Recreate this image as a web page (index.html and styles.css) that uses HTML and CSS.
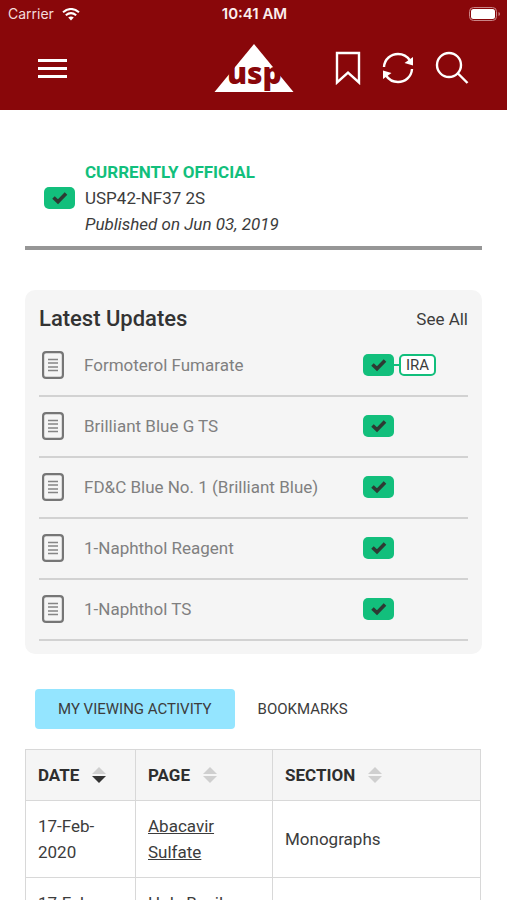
FILE: index.html
```html
<!DOCTYPE html>
<html lang="en">
<head>
<meta charset="utf-8">
<meta name="viewport" content="width=device-width, initial-scale=1">
<title>USP</title>
<link rel="stylesheet" href="styles.css">
</head>
<body>
<svg class="defs" width="0" height="0" aria-hidden="true">
  <symbol id="check" viewBox="0 0 16 14"><path d="M1.500 6.500 6 10.800 14 2.600" fill="none" stroke="#2d3a33" stroke-width="3.6"/></symbol>
  <symbol id="doc" viewBox="0 0 22 28"><rect x="1.100" y="1.100" width="19.800" height="25.800" rx="3" fill="none" stroke="#767676" stroke-width="2.200"/><path d="M6 8.500h10M6 12h10M6 16h10M6 19.500h10" stroke="#858585" stroke-width="1.5"/></symbol>
  <symbol id="sort" viewBox="0 0 14 18"><path class="up" d="M7 1 14 8H0Z"/><path class="down" d="M0 10h14L7 17Z"/></symbol>
</svg>
<div class="app">
  <header class="header">
    <div class="status">
      <div class="carrier">Carrier
        <svg width="18" height="13" viewBox="0 0 18 13" fill="none" stroke="#fff" stroke-width="2.1"><path d="M1 4.300Q9-2.300 17 4.300M3.800 7.300Q9 3 14.200 7.300"/><path d="M6.200 9.500Q9 7.300 11.800 9.500L9 12.500Z" fill="#fff" stroke="none"/></svg>
      </div>
      <div class="clock">10:41 AM</div>
      <div class="power">
        <svg width="32" height="14" viewBox="0 0 32 14"><rect x=".5" y=".5" width="27" height="13" rx="4" fill="none" stroke="#c98587"/><rect x="2" y="2" width="24" height="10" rx="2.500" fill="#fff"/><path d="M29.500 5v4q1.500-.5 1.500-2t-1.500-2" fill="#c98587"/></svg>
      </div>
    </div>
    <nav class="bar">
      <button class="icon-btn menu" aria-label="Menu"><svg width="30" height="22" viewBox="0 0 30 22" stroke="#fff" stroke-width="3"><path d="M0 3.500h29M0 11.500h29M0 19.500h29"/></svg></button>
      <a class="logo" href="#" aria-label="USP home">
        <svg width="80" height="50" viewBox="0 0 80 50"><path d="M40 1 79.500 49H.5Z" fill="#fff"/><text x="13" y="41" class="logo-text">usp</text></svg>
      </a>
      <div class="actions">
        <button class="icon-btn" aria-label="Bookmarks"><svg width="26" height="34" viewBox="0 0 26 34"><path d="M2 2h22v29.500L13 21.500 2 31.500Z" fill="none" stroke="#fff" stroke-width="2.400"/></svg></button>
        <button class="icon-btn" aria-label="Refresh"><svg width="32" height="34" viewBox="0 0 32 34"><g fill="none" stroke="#fff" stroke-width="2.400"><path d="M2 16C2.500 8 9 3 16 3c5 0 9 2 12 6.500"/><path d="M30 18C29.500 26 23 31 16 31c-5 0-9-2-12-6.500"/></g><path d="M31 6v8.500L22.500 12ZM1 28v-8.500L9.500 22Z" fill="#fff"/></svg></button>
        <button class="icon-btn" aria-label="Search"><svg width="34" height="34" viewBox="0 0 34 34" fill="none" stroke="#fff" stroke-width="2.400"><circle cx="14" cy="14" r="12"/><path d="M22.500 22 32.500 32"/></svg></button>
      </div>
    </nav>
  </header>
  <main class="content">
    <section class="official">
      <span class="badge"><svg width="16" height="14"><use href="#check"/></svg></span>
      <div>
        <h1 class="official-title">CURRENTLY OFFICIAL</h1>
        <p>USP42-NF37 2S</p>
        <p class="published">Published on Jun 03, 2019</p>
      </div>
    </section>
    <section class="updates">
      <div class="updates-head"><h2>Latest Updates</h2><a href="#">See All</a></div>
      <ul class="list">
        <li><svg width="22" height="28"><use href="#doc"/></svg><span class="name">Formoterol Fumarate</span><span class="tags"><span class="badge"><svg width="16" height="14"><use href="#check"/></svg></span><span class="link"></span><span class="ira">IRA</span></span></li>
        <li><svg width="22" height="28"><use href="#doc"/></svg><span class="name">Brilliant Blue G TS</span><span class="tags"><span class="badge"><svg width="16" height="14"><use href="#check"/></svg></span></span></li>
        <li><svg width="22" height="28"><use href="#doc"/></svg><span class="name">FD&amp;C Blue No. 1 (Brilliant Blue)</span><span class="tags"><span class="badge"><svg width="16" height="14"><use href="#check"/></svg></span></span></li>
        <li><svg width="22" height="28"><use href="#doc"/></svg><span class="name">1-Naphthol Reagent</span><span class="tags"><span class="badge"><svg width="16" height="14"><use href="#check"/></svg></span></span></li>
        <li><svg width="22" height="28"><use href="#doc"/></svg><span class="name">1-Naphthol TS</span><span class="tags"><span class="badge"><svg width="16" height="14"><use href="#check"/></svg></span></span></li>
      </ul>
    </section>
    <div class="tabs">
      <button class="tab active">MY VIEWING ACTIVITY</button>
      <button class="tab">BOOKMARKS</button>
    </div>
    <table class="activity">
      <colgroup><col class="c-date"><col class="c-page"><col></colgroup>
      <thead><tr>
        <th scope="col"><button class="sort desc">DATE<svg width="14" height="18"><use href="#sort"/></svg></button></th>
        <th scope="col"><button class="sort">PAGE<svg width="14" height="18"><use href="#sort"/></svg></button></th>
        <th scope="col"><button class="sort">SECTION<svg width="14" height="18"><use href="#sort"/></svg></button></th>
      </tr></thead>
      <tbody>
        <tr><td>17-Feb-2020</td><td><a href="#">Abacavir Sulfate</a></td><td>Monographs</td></tr>
        <tr><td>17-Feb-2020</td><td><a href="#">Holy Basil Leaf</a></td><td>Monographs</td></tr>
      </tbody>
    </table>
  </main>
</div>
</body>
</html>
```
FILE: styles.css
```css
* { box-sizing: border-box; }
body {
  margin: 0;
  background: #fff;
  color: #3c3c3c;
  font: 17px/26px Roboto, sans-serif;
}
h1, h2, p, ul { margin: 0; padding: 0; }
a { color: inherit; }
button { border: 0; padding: 0; background: none; color: inherit; font: inherit; cursor: pointer; }
svg { display: block; flex: none; }
.defs { position: absolute; }
.app { height: 100vh; overflow: hidden; }

.header { background: #89070a; color: #fff; padding-bottom: 16px; }
.status {
  display: grid;
  grid-template-columns: 1fr auto 1fr;
  align-items: center;
  padding: 0 6px 0 8px;
  height: 28px;
  font: 14px/20px Inter, sans-serif;
}
.carrier { display: flex; align-items: center; gap: 8px; color: #f3dcdc; }
.clock { font-size: 15px; font-weight: 600; color: #fbeeee; }
.power { justify-self: end; }
.bar {
  display: grid;
  grid-template-columns: 1fr auto 1fr;
  align-items: center;
  height: 66px;
  padding: 14px 38px 0;
}
.menu { justify-self: start; }
.logo-text { font: 800 30px "Open Sans", sans-serif; fill: #89070a; }
.actions { display: flex; justify-content: flex-end; align-items: center; gap: 21px; }

.content { padding: 49px 25px 0; }
.official {
  display: flex;
  align-items: center;
  gap: 10px;
  padding: 0 19px 9px;
  border-bottom: 4px solid #969696;
}
.official-title { font: 700 17px/26px Roboto, sans-serif; color: #12bf7c; }
.published { font-style: italic; }
.badge {
  display: flex;
  align-items: center;
  justify-content: center;
  width: 31px;
  height: 22px;
  border-radius: 5px;
  background: #12bf7c;
}

.updates {
  margin-top: 40px;
  padding: 16px 14px 13px;
  border-radius: 10px;
  background: #f5f5f5;
}
.updates-head { display: flex; justify-content: space-between; align-items: center; }
.updates-head h2 { font-size: 22px; font-weight: 500; color: #333; }
.updates-head a { text-decoration: none; }
.list { margin-top: 4px; list-style: none; }
.list li {
  display: grid;
  grid-template-columns: 42px 1fr 105px;
  align-items: center;
  height: 61px;
  padding: 0 0 2px 3px;
  border-bottom: 2px solid #d2d2d2;
  color: #808080;
}
.tags { display: flex; align-items: center; }
.link { width: 5px; height: 2px; background: #12bf7c; }
.ira {
  padding: 0 5px;
  border: 2px solid #12bf7c;
  border-radius: 5px;
  background: #fff;
  color: #3c3c3c;
  font-size: 15px;
  line-height: 18px;
}

.tabs { display: flex; margin: 35px 10px 20px; }
.tab { height: 40px; padding: 0 23px; border-radius: 4px; font-size: 15px; }
.tab.active { background: #94e5ff; }

.activity { width: calc(100% - 1px); table-layout: fixed; border-collapse: collapse; }
.c-date { width: 110px; }
.c-page { width: 137px; }
.activity th, .activity td {
  padding: 12px;
  border: 1px solid #d8d8d8;
  text-align: left;
  vertical-align: middle;
}
.activity th { background: #f5f5f5; color: #2e2e2e; }
.sort { display: flex; align-items: center; gap: 13px; font-weight: 700; }
.sort svg { fill: #cfcfcf; --down: #cfcfcf; }
.sort.desc svg { --down: #333; }
.down { fill: var(--down); }
```
